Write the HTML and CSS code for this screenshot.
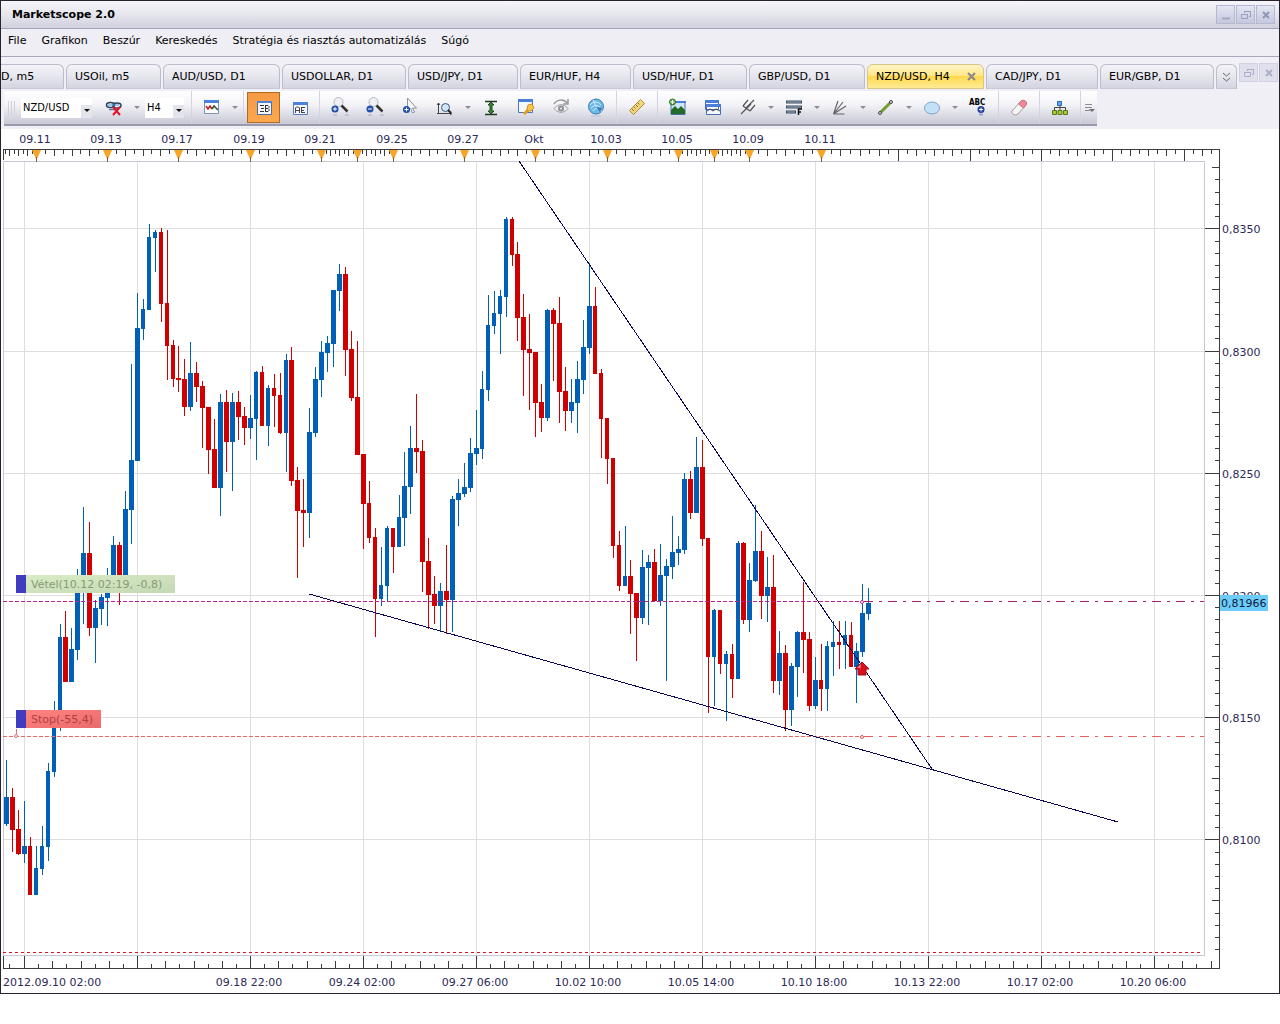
FILE: index.html
```html
<!DOCTYPE html>
<html lang="hu">
<head>
<meta charset="utf-8">
<title>Marketscope 2.0</title>
<link rel="stylesheet" href="styles.css">
</head>
<body>
<div class="window">
  <header class="titlebar">
    <h1 class="title">Marketscope 2.0</h1>
    <div class="winbuttons">
      <button class="winbtn" aria-label="Minimize"><svg width="12" height="12"><path d="M2 9.500h8" stroke="#a2a6c4" stroke-width="2"/></svg></button>
      <button class="winbtn" aria-label="Restore"><svg width="12" height="12"><path d="M4.500 4V2.500h6v5H9M4 2.500h7M1.500 5.500h6v4h-6zM1 5.500h7" fill="none" stroke="#9a9ebe"/></svg></button>
      <button class="winbtn" aria-label="Close"><svg width="12" height="12"><path d="M3 3l6 6M9 3l-6 6" stroke="#9296b4" stroke-width="2"/></svg></button>
    </div>
  </header>

  <nav class="menubar">
    <a href="#">File</a><a href="#">Grafikon</a><a href="#">Beszúr</a><a href="#">Kereskedés</a><a href="#">Stratégia és riasztás automatizálás</a><a href="#">Súgó</a>
  </nav>

  <div class="tabs">
    <button class="tab tab-cut">D, m5</button>
    <button class="tab">USOil, m5</button>
    <button class="tab">AUD/USD, D1</button>
    <button class="tab">USDOLLAR, D1</button>
    <button class="tab">USD/JPY, D1</button>
    <button class="tab">EUR/HUF, H4</button>
    <button class="tab">USD/HUF, D1</button>
    <button class="tab">GBP/USD, D1</button>
    <button class="tab tab-active">NZD/USD, H4<svg width="9" height="9"><path d="M1 1l7 7M8 1l-7 7" stroke="#86868e" stroke-width="2"/></svg></button>
    <button class="tab">CAD/JPY, D1</button>
    <button class="tab">EUR/GBP, D1</button>
    <button class="tab tab-more" aria-label="More tabs"><svg width="9" height="10"><path d="M1 1l3.500 3L8 1M1 6l3.500 3L8 6" fill="none" stroke="#666"/></svg></button>
    <div class="childbuttons">
      <button class="winbtn faded" aria-label="Restore chart"><svg width="12" height="12"><path d="M4.500 4V2.500h6v5H9M4 2.500h7M1.500 5.500h6v4h-6zM1 5.500h7" fill="none" stroke="#aaaecb"/></svg></button>
      <button class="winbtn faded" aria-label="Close chart"><svg width="12" height="12"><path d="M3 3l6 6M9 3l-6 6" stroke="#aaaec8" stroke-width="2"/></svg></button>
    </div>
  </div>

  <div class="toolstrip">
    <div class="toolbar" role="toolbar">
      <span class="grip"></span>
      <span class="combo combo-wide"><select aria-label="Instrument"><option>NZD/USD</option></select><i class="drop"></i></span>
      <button class="tool gap-left" aria-label="Link"><svg viewBox="0 0 22 22"><g fill="none" stroke="#27435f" stroke-width="1.500"><ellipse cx="7.500" cy="8" rx="4" ry="2.500"/><ellipse cx="14" cy="8.500" rx="4" ry="2.500"/><path d="M6 12.500h7" stroke="#53779b"/></g><path d="M5 8h11" stroke="#4c9bd8"/><path d="M10 10l7 8M17 10l-7 8" stroke="#e3122b" stroke-width="2"/></svg></button>
      <button class="arrow" aria-label="Link menu"></button>
      <span class="combo"><select aria-label="Period"><option>H4</option></select><i class="drop"></i></span>
      <span class="sep gap-left"></span>
      <button class="tool" aria-label="Chart type"><svg viewBox="0 0 22 22"><path d="M3.500 3.500h14v13h-14z" fill="#fff" stroke="#7a90bd"/><path d="M3 3h15v3H3z" fill="#4b82dc"/><path d="M5 9l2 3 2-3 2 3" fill="none" stroke="#c01818" stroke-width="1.500"/><path d="M11 12l2-3 4 4" fill="none" stroke="#30502c" stroke-width="1.500"/></svg></button>
      <button class="arrow" aria-label="Chart type menu"></button>
      <span class="sep"></span>
      <button class="tool tool-on" aria-label="Bid"><svg viewBox="0 0 22 22"><path d="M4.500 4.500h14v13h-14z" fill="#f5f8ff" stroke="#4b6bb0"/><path d="M4 4h15v2H4z" fill="#4b82dc"/><path d="M7 8.500h4M8 11.500h3M7 14.500h4M12.500 8v7M12 8.500h3l1 1v1l-1 1h-2.500M15 11.500l1 1v1l-1 1h-3" fill="none" stroke="#333"/></svg></button>
      <button class="tool" aria-label="Ask"><svg viewBox="0 0 22 22"><path d="M5.500 5.500h14v12h-14z" fill="#f5f8ff" stroke="#5878b8"/><path d="M5 5h15v3H5z" fill="#4b82dc"/><path d="M7.500 16v-5l1-1h2l1 1v5M8 13.500h3M13.500 10v6M14 10.500h3M14 13.500h2M14 15.500h3" fill="none" stroke="#444"/></svg></button>
      <span class="sep"></span>
      <button class="tool" aria-label="Zoom in"><svg viewBox="0 0 22 22"><circle cx="9.500" cy="5" r="4.500" fill="#eef0f4" stroke="#b4b8c2"/><path d="M12.500 8.500l6 6" stroke="#333" stroke-width="2.500"/><circle cx="6" cy="12" r="3.500" fill="#1f4fa8"/><path d="M4 12h4M6 10v4" stroke="#fff"/><path d="M4 18h4M16 18h4" stroke="#aaaabc"/></svg></button>
      <button class="tool" aria-label="Zoom out"><svg viewBox="0 0 22 22"><circle cx="9.500" cy="5" r="4.500" fill="#eef0f4" stroke="#b4b8c2"/><path d="M12.500 8.500l6 6" stroke="#333" stroke-width="2.500"/><circle cx="6" cy="12" r="3.500" fill="#1f4fa8"/><path d="M4 12h4" stroke="#fff"/><path d="M4 18h4M16 18h4" stroke="#aaaabc"/></svg></button>
      <button class="tool" aria-label="Pointer"><svg viewBox="0 0 22 22"><path d="M8.500 1v13l3-3 2 5 2-1-2-4h4z" fill="#f6f6f8" stroke="#8e929c"/><circle cx="7.500" cy="12.500" r="3.500" fill="#1f4fa8"/><path d="M5.500 12.500h4M7.500 10.500v4" stroke="#fff"/></svg></button>
      <button class="tool" aria-label="Scale"><svg viewBox="0 0 22 22"><path d="M4.500 6v11M3 8l1.500-2L6 8M3 16.500h14M16 15l2 1.500-2 1.500" fill="none" stroke="#444"/><circle cx="11.500" cy="10.500" r="4" fill="#cfe8f8" stroke="#3a5c80"/><path d="M14 13l3 3" stroke="#222" stroke-width="2"/></svg></button>
      <button class="arrow" aria-label="Scale menu"></button>
      <button class="tool" aria-label="Fit height"><svg viewBox="0 0 22 22"><path d="M5 4.500h12M5 17.500h12" stroke="#1d3b1b" stroke-width="1.500"/><path d="M11 5l3 3h-2v6h2l-3 3-3-3h2V8H8z" fill="#3d8a35" stroke="#1d4a1b"/></svg></button>
      <button class="tool" aria-label="Properties"><svg viewBox="0 0 22 22"><path d="M3.500 2.500h14v13h-14z" fill="#f4f8ff" stroke="#4b75bd"/><path d="M3 2h15v3H3z" fill="#4b7ed8"/><path d="M9 17l4-4" stroke="#e0a022" stroke-width="3"/><path d="M12 12l1-4 4-1 2 4-3 3h-3z" fill="#f8c64a" stroke="#cf8f18"/></svg></button>
      <button class="tool" aria-label="Refresh view"><svg viewBox="0 0 22 22"><path d="M4 7c3-5 10-5 13-1M18 2v5h-5" fill="none" stroke="#96989e" stroke-width="1.500"/><path d="M4 11.500c4-5 10-5 14 0-4 5-10 5-14 0z" fill="#f0f0f2" stroke="#9a9ca2"/><circle cx="11" cy="11.500" r="3" fill="#8d9096"/><circle cx="11" cy="11.500" r="1" fill="#eee"/></svg></button>
      <button class="tool" aria-label="Web"><svg viewBox="0 0 22 22"><circle cx="11" cy="9.500" r="7.500" fill="#6cbae8" stroke="#3c7eb4"/><path d="M11 9.500l6 5M11 9.500L8 2.500M5 8c3-4 8-4 11 0M6 11c3-3 6-3 9-1M8 14c1-2 3-3 5-2" fill="none" stroke="#cfeafa"/><path d="M11 10l6 1-2 4z" fill="#3a78b4"/><path d="M6 19h10" stroke="#b0c4dc"/></svg></button>
      <span class="sep"></span>
      <button class="tool" aria-label="Ruler"><svg viewBox="0 0 22 22"><path d="M3.500 13.500l11-11 4 4-11 11z" fill="#f3d680" stroke="#b08a34"/><path d="M6 12l2 2M8 10l1.500 1.500M10 8l2 2M12 6l1.500 1.500" stroke="#8a6a24"/></svg></button>
      <span class="sep"></span>
      <button class="tool" aria-label="Add picture"><svg viewBox="0 0 22 22"><path d="M4 4.500h14v13H4z" fill="#cfe6f8" stroke="#4870a8"/><path d="M4 4h15v2H4z" fill="#4b7ed8"/><path d="M4 17v-4l4-4 3 3 3-3 4 4v4z" fill="#236b2a"/><circle cx="5.500" cy="5" r="3" fill="#5fb04c" stroke="#2f7428"/><path d="M3.500 5h4M5.500 3v4" stroke="#fff"/></svg></button>
      <button class="tool" aria-label="Templates"><svg viewBox="0 0 22 22"><path d="M3.500 3.500h13v9h-13zM4.500 7.500h14v10h-14z" fill="#f4f8ff" stroke="#4b6bb0"/><path d="M3 3h14v3H3zM4 7h15v3H4z" fill="#4b7ed8"/><path d="M5 14l3-2 3 2 3-2 4 2" fill="none" stroke="#444"/></svg></button>
      <button class="tool" aria-label="Pitchfork"><svg viewBox="0 0 22 22"><path d="M4 17L14 7M6 9l7 5M6 9l5-6M13 14l5-6M9 11l8-8" stroke="#555" stroke-width="1.200"/></svg></button>
      <button class="arrow" aria-label="Pitchfork menu"></button>
      <button class="tool" aria-label="Fibonacci"><svg viewBox="0 0 22 22"><path d="M3 5h16M3 10h16M3 15h10" stroke="#3f4d60" stroke-width="3"/><path d="M4 5h14M4 10h14M4 15h8" stroke="#9fb0c4"/><path d="M15.500 18v-6H19M15 15h3" fill="none" stroke="#111" stroke-width="1.500"/></svg></button>
      <button class="arrow" aria-label="Fibonacci menu"></button>
      <button class="tool" aria-label="Fan"><svg viewBox="0 0 22 22"><path d="M4.500 17L9 4M4.500 17L14 5M4.500 17L17 9M4.500 17h11" stroke="#666" stroke-width="1.200"/></svg></button>
      <button class="arrow" aria-label="Fan menu"></button>
      <button class="tool" aria-label="Line"><svg viewBox="0 0 22 22"><path d="M5 16L16 5" stroke="#6f9e2c" stroke-width="3"/><circle cx="5" cy="16" r="1.500" fill="#ddd" stroke="#444"/><circle cx="16" cy="5" r="1.500" fill="#ddd" stroke="#444"/></svg></button>
      <button class="arrow" aria-label="Line menu"></button>
      <button class="tool" aria-label="Ellipse"><svg viewBox="0 0 22 22"><ellipse cx="11" cy="11" rx="7.500" ry="6" fill="#c4e0f6" stroke="#7da6cc"/></svg></button>
      <button class="arrow" aria-label="Ellipse menu"></button>
      <button class="tool" aria-label="Text label"><svg viewBox="0 0 22 22"><text x="2" y="8" class="abc">ABC</text><circle cx="14" cy="12.500" r="3.500" fill="#1f3f98"/><path d="M12 12.500h4M14 10.500v4" stroke="#fff"/><path d="M12 17.500h4" stroke="#9aa4cc" stroke-width="2"/></svg></button>
      <span class="sep"></span>
      <button class="tool" aria-label="Eraser"><svg viewBox="0 0 22 22"><path d="M4 14l9-10c3-2 7 1 5 4l-8 9c-3 2-7 0-6-3z" fill="#f6f4f4" stroke="#a89a9a"/><path d="M10.500 7L13 4c3-2 7 1 5 4l-2.500 3z" fill="#ee8a98" stroke="#c87480"/></svg></button>
      <span class="sep"></span>
      <button class="tool" aria-label="Tree"><svg viewBox="0 0 22 22"><path d="M11 8v5M5.500 13v-2.500h11V13" fill="none" stroke="#444"/><path d="M8.500 4.500h4v4h-4z" fill="#5fa8ee" stroke="#2c66b0"/><path d="M3.500 13.500h4v4h-4zM9 13.500h4v4H9zM14.500 13.500h4v4h-4z" fill="#a8c83c" stroke="#5a7a18"/></svg></button>
      <span class="sep"></span>
      <button class="overflow" aria-label="Toolbar options"><svg width="10" height="10"><path d="M0 1.500h7M0 4.500h7M0 7.500h5" stroke="#8a8a96"/><path d="M4 6h6L7 9z" fill="#6c6c78"/></svg></button>
    </div>
  </div>

  <main class="chart">
    <svg id="chart" viewBox="1 129 1278 864" role="img" aria-label="NZD/USD, H4">
      <defs>
        <linearGradient id="buy" x1="0" y1="0" x2="1" y2="1"><stop offset="0" stop-color="#d9ecc6"/><stop offset="1" stop-color="#c5d8b4"/></linearGradient>
        <linearGradient id="stop" x1="0" y1="0" x2="1" y2="1"><stop offset="0" stop-color="#ff8480"/><stop offset="1" stop-color="#ea6a6a"/></linearGradient>
      </defs>
      <g id="grid"></g>
      <g id="candles"></g>
      <g id="axes"></g>
      <g fill="none" shape-rendering="crispEdges">
        <path d="M3 601.500H862" stroke="#c02090" stroke-dasharray="4 2"/>
        <path d="M864 601.500H1204" stroke="#a8207c" stroke-dasharray="9 6 3 6"/>
        <path d="M3 736.500H862" stroke="#f06464" stroke-dasharray="4 2"/>
        <path d="M864 736.500H1204" stroke="#e86060" stroke-dasharray="9 6 3 6"/>
        <path d="M3 952.500H1202" stroke="#d81028" stroke-dasharray="3 3"/>
        <path d="M519 161L932 769M309 594L1118 822" stroke="#0a0850"/>
      </g>
      <g fill="#fff">
        <circle cx="862" cy="602" r="1.500" stroke="#b0288a"/>
        <circle cx="862" cy="737" r="1.500" stroke="#e05050"/>
        <circle cx="16" cy="736" r="1.500" stroke="#e87070"/>
      </g>
      <path d="M16.500 729v5" stroke="#e87070"/>
      <path d="M862 662l7 7h-3v6h-8v-6h-3z" fill="#d8101c" stroke="#a80a14"/>
      <path d="M861 664l-4 4h3v3z" fill="#ff8a80"/>
      <path d="M26 575h149v18H26z" fill="url(#buy)"/>
      <path d="M26 710h75v18H26z" fill="url(#stop)"/>
      <path d="M16 575h10v18H16zM16 710h10v18H16z" fill="#403cc0"/>
      <text x="31" y="588" class="buy-text">Vétel(10.12 02:19, -0,8)</text>
      <text x="31" y="723" class="stop-text">Stop(-55,4)</text>
      <path d="M1220 595h48v16h-48z" fill="#6ccbf8"/>
      <text x="1221" y="607" class="tag-text">0,81966</text>
    </svg>
  </main>
</div>
<script src="chart.js"></script>
</body>
</html>
```
FILE: styles.css
```css
* { box-sizing: border-box; }
body {
  margin: 0;
  background: #fff;
  font-family: "DejaVu Sans", Verdana, sans-serif;
  font-size: 11px;
  color: #000;
}
button, select { font: inherit; color: inherit; border: 0; padding: 0; margin: 0; background: none; }
.window { border: 1px solid #28242f; background: #eeeef4; }

.titlebar {
  display: flex;
  align-items: center;
  justify-content: space-between;
  height: 28px;
  padding: 0 4px 0 11px;
  background: linear-gradient(#f4f4f9, #e6e6ee 50%, #d0d0de);
  border-bottom: 1px solid #a4a4b8;
}
.title { margin: 0; font-size: 11px; font-weight: bold; }
.winbuttons, .childbuttons { display: flex; gap: 1px; }
.winbtn {
  width: 19px;
  height: 19px;
  display: grid;
  place-items: center;
  background: linear-gradient(#e4e6f2, #c4c8de);
  border: 1px solid #b4b8d0;
}
.faded { background: #dfe0ec; border-color: #d0d2e2; }

.menubar {
  display: flex;
  align-items: center;
  gap: 15px;
  height: 28px;
  padding: 0 7px 4px;
  background: #eeeef4;
  border-bottom: 1px solid #a8a8bc;
}
.menubar a { color: #000; text-decoration: none; }

.tabs {
  display: grid;
  grid-template-columns: 63px 95px 117px 124px 110px 111px 114px 116px 117px 112px 114px 21px 1fr;
  column-gap: 2px;
  align-items: end;
  height: 32px;
  padding-top: 6px;
  background: #f1f0f7;
}
.tab {
  height: 25px;
  padding-left: 8px;
  text-align: left;
  white-space: nowrap;
  overflow: hidden;
  background: linear-gradient(#f3f3f8, #e6e6ee 50%, #d4d4e0);
  border: 1px solid #bcbccc;
  border-bottom-color: #c8c8d6;
  border-radius: 6px 6px 0 0;
}
.tab-cut { padding-left: 0; border-left: 0; border-top-left-radius: 0; }
.tab-active {
  display: flex;
  align-items: center;
  justify-content: space-between;
  padding-right: 7px;
  background: linear-gradient(#fff6c8, #ffe88a 45%, #ffd84e 50%, #ffeb96);
  border-color: #d6c682;
}
.tab-more { display: grid; place-items: center; padding: 0; }
.childbuttons { align-self: start; justify-content: flex-end; padding-right: 1px; }

.toolstrip { padding: 2px 3px 3px; background: #efeff5; }
.toolbar {
  display: inline-flex;
  align-items: center;
  vertical-align: top;
  height: 35px;
  background: linear-gradient(#fff, #f4f4f8 40%, #c8c8d6);
  border-bottom: 2px solid #9a9aac;
}
.grip {
  width: 9px;
  height: 14px;
  margin: 0 4px;
  background: repeating-linear-gradient(90deg, #d0d0da 0 1px, transparent 1px 3px);
}
.combo { position: relative; width: 39px; height: 20px; background: #fff; }
.combo-wide { width: 71px; }
.combo select {
  width: 100%;
  height: 20px;
  padding-left: 2px;
  appearance: none;
  font-family: "DejaVu Sans Condensed", "DejaVu Sans", sans-serif;
}
.drop {
  position: absolute;
  right: 0;
  bottom: 0;
  width: 11px;
  height: 13px;
  background: #e4e4ec;
  pointer-events: none;
}
.drop::after, .arrow::after {
  content: "";
  position: absolute;
  left: 3px;
  top: 4px;
  border: 3px solid transparent;
  border-top-color: #111;
  border-bottom: 0;
}
.gap-left { margin-left: 4px; }
.tool { width: 35px; height: 31px; display: grid; place-items: center; }
.tool svg { width: 22px; height: 22px; }
.tool-on {
  background: linear-gradient(#f59a45, #fba84e);
  border: 1px solid #b06a20;
  width: 33px;
  margin: 0 1px;
}
.arrow { position: relative; width: 11px; height: 31px; }
.arrow + .combo { margin-left: 3px; }
.arrow::after { top: 14px; border-top-color: #8c8c98; }
.sep {
  width: 6px;
  height: 33px;
  background: linear-gradient(#d4d4e0, #d4d4e0) center / 1px 100% no-repeat;
}
.overflow { width: 14px; height: 31px; display: grid; place-items: center; }
.abc { font: bold 8px "DejaVu Sans Condensed", "DejaVu Sans", sans-serif; }

.chart { background: #fff; }
.chart svg { display: block; width: 100%; height: auto; }
.chart text { font-size: 11px; fill: #2c2858; }
.chart .mid { text-anchor: middle; }
.chart .buy-text { fill: #879a76; }
.chart .stop-text { fill: #ac4040; }
.chart .tag-text { fill: #0c1c3c; }
```
FILE: chart.js
```js
const NS = "http://www.w3.org/2000/svg";
const UP = "#0060b8", DOWN = "#d00000";

// One bar per entry: direction, high, low, body top, body bottom.
const bars = `
B 760 826 797 824|R 788 852 797 830|R 810 855 829 854|B 801 863 846 854|R 837 895 846 895|B 846 895 868 895|B 826 875 846 869|B 763 861 771 847|B 701 777 720 772|B 624 731 637 720
R 611 682 637 682|B 628 682 649 682|B 569 660 582 650|B 507 624 553 585|R 522 636 553 628|B 600 663 608 628|B 594 625 597 609|B 568 626 582 598|B 536 590 545 582|R 542 605 545 590
B 491 592 509 590|B 364 544 460 510|B 293 461 328 461|B 299 340 309 329|B 224 310 237 310|B 230 272 232 238|R 228 322 232 304|R 230 380 303 346|R 340 387 345 379|R 346 392 378 380
R 359 416 379 407|B 342 411 373 407|R 362 402 373 387|R 381 448 386 408|R 407 474 407 450|R 419 488 449 488|B 394 516 402 488|R 390 472 402 442|B 393 491 402 442|R 391 440 402 417
R 407 445 416 428|B 395 439 418 428|B 371 460 372 419|R 366 426 372 426|B 385 446 388 426|R 374 427 388 396|R 373 434 395 433|B 354 472 360 433|R 347 486 360 481|R 467 578 480 511
R 479 547 510 513|B 408 538 432 513|B 367 437 379 433|B 341 397 352 380|B 336 372 343 353|B 290 367 290 344|B 264 311 274 291|R 267 376 274 350|R 331 401 349 398|R 341 455 397 455
R 454 549 454 504|R 481 543 503 538|R 528 637 537 599|B 547 606 585 599|B 526 601 528 586|R 528 573 528 547|B 495 547 517 547|B 452 546 486 518|B 426 514 448 487|R 394 473 448 452
R 440 592 451 562|R 538 629 561 595|R 576 624 594 606|B 583 631 591 606|R 545 634 591 600|B 496 632 499 600|B 479 526 493 500|B 463 497 487 494|B 438 492 453 488|B 410 465 448 454
B 371 459 389 449|B 295 401 325 390|B 291 334 313 326|B 290 354 296 314|B 217 317 219 297|R 217 266 219 255|R 242 341 254 318|R 294 396 317 350|R 314 410 349 353|R 352 437 352 403
R 384 432 402 418|B 309 421 310 418|R 308 381 310 324|R 297 423 323 392|R 367 431 391 411|B 379 423 402 411|B 361 433 379 403|B 320 394 347 380|B 263 354 306 348|R 287 374 306 374
R 369 458 373 419|R 418 484 418 459|R 458 558 458 546|R 531 591 545 586|B 526 586 576 586|R 560 634 576 594|R 593 661 593 618|B 550 624 567 618|B 555 625 562 568|R 549 601 562 601
B 544 606 575 601|B 559 681 566 576|B 516 579 552 567|B 536 565 549 553|B 473 554 479 550|R 471 519 479 513|B 437 513 467 513|R 440 546 467 539|R 538 713 538 657|B 609 706 610 657
R 610 674 610 664|B 651 721 654 664|R 644 698 654 679|B 541 679 543 679|R 542 624 543 620|B 563 632 580 620|B 505 582 551 581|R 531 619 551 596|B 557 622 587 596|R 555 693 587 681
B 631 695 653 681|R 645 731 653 710|B 663 726 666 710|B 631 697 632 667|R 582 673 632 640|R 632 711 639 706|B 657 709 680 706|R 644 711 680 689|B 641 711 646 689|B 621 676 642 647
R 621 669 642 645|B 621 669 635 645|R 622 667 635 667|B 643 703 651 667|B 584 657 613 652|B 588 620 603 614`
  .trim().split(/[|\n]/).map(s => s.split(" "));

function add(parent, tag, attrs, text) {
  const el = document.createElementNS(NS, tag);
  for (const k in attrs) el.setAttribute(k, attrs[k]);
  if (text) el.textContent = text;
  document.getElementById(parent).appendChild(el);
}
const line = (parent, d, stroke) =>
  add(parent, "path", { d, stroke, fill: "none", "shape-rendering": "crispEdges" });

// Grid and plot frame
const gridX = Array.from({ length: 11 }, (_, i) => 24 + 113 * i);
const gridY = Array.from({ length: 6 }, (_, i) => Math.round(228.3 + 122.2 * i));
line("grid", gridX.map(x => `M${x + .5} 162V956`).join("") + gridY.map(y => `M4 ${y + .5}H1204`).join(""), "#dedede");
line("grid", "M3.5 161.500H1204.500V955.500H3.5z", "#c8c8d4");

// Candles: 19 bars between two vertical grid lines
const paths = { B: "", R: "" };
bars.forEach(([dir, high, low, top, bottom], i) => {
  const c = 6.5 + i * 113 / 19, x = Math.floor(c);
  const left = x - 2, right = Math.floor(c + 2.7);
  paths[dir] += `M${x} ${high}h1V${low}h-1zM${left} ${top}V${bottom}H${right}V${top}z`;
});
for (const [dir, d] of Object.entries(paths))
  add("candles", "path", { d: d.replace(/M(\d+) (\d+)h1V(\d+)h-1z/g, "M$1 $2V$3h1V$2z"), fill: dir === "B" ? UP : DOWN, "shape-rendering": "crispEdges" });

// Date ruler on top
let ticks = "M3.5 160V149.500H1219.500V968.500H3.5V956";
const days = [36, 107, 178, 250, 321, 393, 464, 535, 607, 678, 749, 821, 898, 970, 1041, 1112, 1184];
const dense = [321, 678];
const tick = (x, h) => { ticks += `M${Math.round(x) + .5} 150v${h}`; };
for (let k = 1; k < 8; k++) tick(36 - k * 4.46, k % 2 ? 4 : 6);
days.forEach((x, i) => {
  tick(x, 11);
  const step = ((days[i + 1] || 1255) - x) / 8;
  const half = dense.includes(x) ? 2 : 1;
  for (let k = 1; k < 8 * half; k++) {
    const tx = x + k * step / half;
    if (tx < 1215) tick(tx, k % 2 ? 4 : 6);
  }
});
// Time ruler at the bottom
gridX.forEach(x => {
  ticks += `M${x + .5} 968v-12`;
  for (let k = 1; k < 8; k++) {
    const tx = Math.round(x + k * 113 / 8);
    if (tx < 1215) ticks += `M${tx + .5} 968v${k % 2 ? -4 : -7}`;
  }
});
ticks += "M9.5 968v-4";
// Price ruler on the right
for (let k = -5; k < 60; k++) {
  const y = Math.round(228.3 + k * 12.22);
  if (y > 960) break;
  const len = k % 10 === 0 ? 14 : k % 5 === 0 ? 7 : 4;
  ticks += `M1219 ${y + .5}h-${len}`;
}
line("axes", ticks, "#3c3c40");

const marks = [36, 107, 178, 250, 321, 357, 393, 464, 535, 607, 678, 714, 749, 821];
marks.forEach(x => add("axes", "path", { d: `M${x - 4} 150h9l-4 9h-1z`, fill: "#f8a428" }));
line("axes", marks.map(x => `M${x + .5} 157v5`).join(""), "#806040");

["09.11", "09.13", "09.17", "09.19", "09.21", "09.25", "09.27", "Okt", "10.03", "10.05", "10.09", "10.11"]
  .forEach((t, i) => add("axes", "text", { x: days[i] - 1, y: 143, class: "mid" }, t));
add("axes", "text", { x: 3, y: 986 }, "2012.09.10 02:00");
["09.18 22:00", "09.24 02:00", "09.27 06:00", "10.02 10:00", "10.05 14:00", "10.10 18:00", "10.13 22:00", "10.17 02:00", "10.20 06:00"]
  .forEach((t, i) => add("axes", "text", { x: gridX[i + 2] - 1, y: 986, class: "mid" }, t));
["0,8350", "0,8300", "0,8250", "0,8200", "0,8150", "0,8100"]
  .forEach((t, i) => add("axes", "text", { x: 1222, y: gridY[i] + 5 }, t));
```
